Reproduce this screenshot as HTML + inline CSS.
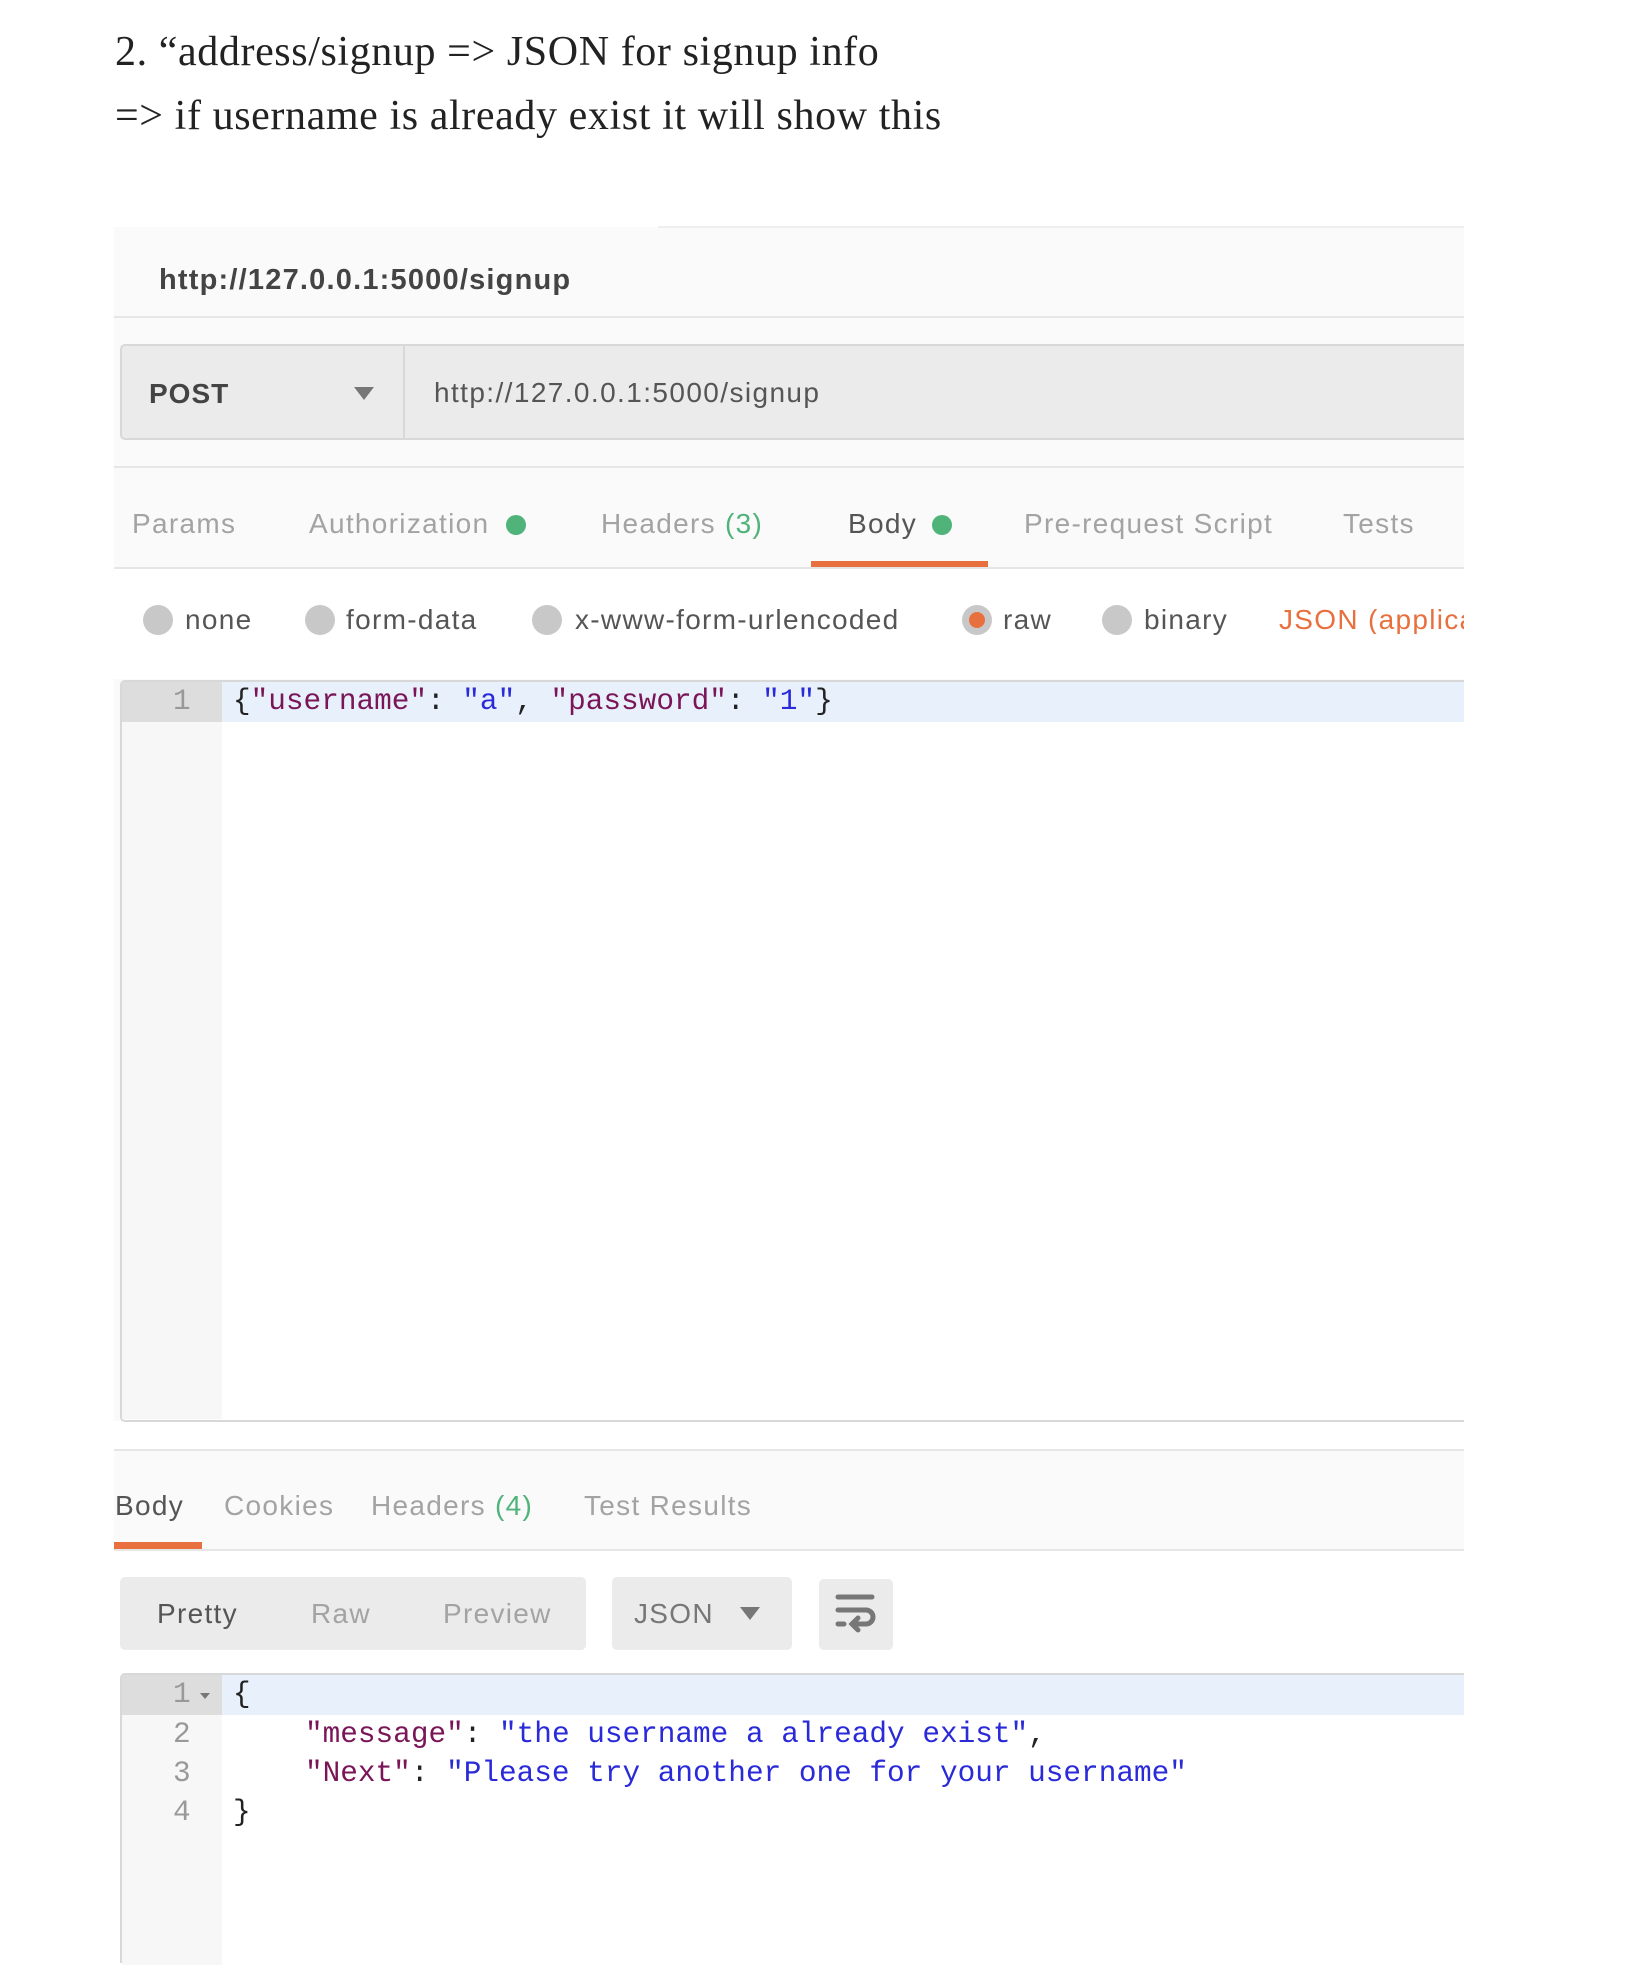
<!DOCTYPE html>
<html><head><meta charset="utf-8"><style>
*{margin:0;padding:0;box-sizing:border-box}
body{width:1630px;height:1948px;background:#fff;position:relative;overflow:hidden;font-family:"Liberation Sans",sans-serif}
.a{position:absolute;white-space:nowrap}
.h{font-family:"Liberation Serif",serif;font-size:42px;color:#222;left:115px;line-height:1;letter-spacing:0.6px}
.t{font-size:28px;color:#a3a3a3;line-height:1;letter-spacing:1.3px}
.m{font-family:"Liberation Mono","DejaVu Sans Mono",monospace;font-size:29.4px;line-height:40px}
.k{color:#7a1657}.s{color:#2a2ad8}
.dot{position:absolute;width:20px;height:20px;border-radius:50%;background:#4fb37a}
.rad{position:absolute;width:30px;height:30px;border-radius:50%;background:#c8c8c8}
.g{color:#4fb37a}
</style></head><body>
<div class="a h" style="top:31px">2. “address/signup =&gt; JSON for signup info</div>
<div class="a h" style="top:95px">=&gt; if username is already exist it will show this</div>

<!-- panel -->
<div class="a" style="left:114px;top:227px;width:1350px;height:1194px;background:#fafafa"></div>
<div class="a" style="left:658px;top:226px;width:806px;height:2px;background:#eee"></div>
<div class="a" style="left:159px;top:264px;font-size:29px;font-weight:bold;color:#444;letter-spacing:1.2px">http://127.0.0.1:5000/signup</div>
<div class="a" style="left:114px;top:316px;width:1350px;height:2px;background:#e6e6e6"></div>
<div class="a" style="left:120px;top:344px;width:1344px;height:96px;background:#ebebeb;border:2px solid #d8d8d8;border-right:none;border-radius:5px 0 0 5px"></div>
<div class="a" style="left:403px;top:346px;width:2px;height:92px;background:#d8d8d8"></div>
<div class="a" style="left:149px;top:378px;font-size:28px;font-weight:bold;color:#444;letter-spacing:1px">POST</div>
<div class="a" style="left:354px;top:387px;width:0;height:0;border-left:10px solid transparent;border-right:10px solid transparent;border-top:13px solid #777"></div>
<div class="a" style="left:434px;top:377px;font-size:28px;color:#555;letter-spacing:1.4px">http://127.0.0.1:5000/signup</div>
<div class="a" style="left:114px;top:466px;width:1350px;height:2px;background:#e6e6e6"></div>

<div class="a t" style="left:132px;top:510px">Params</div>
<div class="a t" style="left:309px;top:510px">Authorization</div><div class="dot" style="left:506px;top:515px"></div>
<div class="a t" style="left:601px;top:510px">Headers <span class="g">(3)</span></div>
<div class="a t" style="left:848px;top:510px;color:#555">Body</div><div class="dot" style="left:932px;top:515px"></div>
<div class="a t" style="left:1024px;top:510px">Pre-request Script</div>
<div class="a t" style="left:1343px;top:510px">Tests</div>
<div class="a" style="left:811px;top:561px;width:177px;height:7px;background:#e8703f"></div>
<div class="a" style="left:114px;top:567px;width:1350px;height:2px;background:#e6e6e6"></div>

<div class="a" style="left:114px;top:569px;width:1350px;height:110px;background:#fff"></div>
<div class="rad" style="left:143px;top:605px"></div><div class="a t" style="left:185px;top:606px;color:#555">none</div>
<div class="rad" style="left:305px;top:605px"></div><div class="a t" style="left:346px;top:606px;color:#555">form-data</div>
<div class="rad" style="left:532px;top:605px"></div><div class="a t" style="left:575px;top:606px;color:#555">x-www-form-urlencoded</div>
<div class="rad" style="left:962px;top:605px"></div><div class="a" style="left:969px;top:612px;width:16px;height:16px;border-radius:50%;background:#e8703f"></div><div class="a t" style="left:1003px;top:606px;color:#555">raw</div>
<div class="rad" style="left:1102px;top:605px"></div><div class="a t" style="left:1144px;top:606px;color:#555">binary</div>
<div class="a t" style="left:1279px;top:606px;color:#e8703f;width:185px;overflow:hidden">JSON (application/json)</div>

<!-- request editor -->
<div class="a" style="left:120px;top:680px;width:1344px;height:742px;background:#fff;border:2px solid #d8d8d8;border-right:none;border-radius:5px 0 0 5px"></div>
<div class="a" style="left:122px;top:682px;width:100px;height:737px;background:#f7f7f7"></div>
<div class="a" style="left:122px;top:682px;width:100px;height:40px;background:#ddd"></div>
<div class="a" style="left:222px;top:682px;width:1242px;height:40px;background:#e8f0fc"></div>
<div class="a m" style="left:173px;top:682px;color:#999">1</div>
<div class="a m" style="left:233px;top:682px;color:#222">{<span class="k">"username"</span>: <span class="s">"a"</span>, <span class="k">"password"</span>: <span class="s">"1"</span>}</div>

<!-- response -->
<div class="a" style="left:114px;top:1449px;width:1350px;height:2px;background:#e6e6e6"></div>
<div class="a" style="left:114px;top:1451px;width:1350px;height:99px;background:#fafafa"></div>
<div class="a t" style="left:115px;top:1492px;color:#555">Body</div>
<div class="a t" style="left:224px;top:1492px">Cookies</div>
<div class="a t" style="left:371px;top:1492px">Headers <span class="g">(4)</span></div>
<div class="a t" style="left:584px;top:1492px">Test Results</div>
<div class="a" style="left:114px;top:1542px;width:88px;height:7px;background:#e8703f"></div>
<div class="a" style="left:114px;top:1549px;width:1350px;height:2px;background:#e6e6e6"></div>

<div class="a" style="left:120px;top:1577px;width:466px;height:73px;background:#ebebeb;border-radius:5px"></div>
<div class="a t" style="left:157px;top:1600px;color:#555">Pretty</div>
<div class="a t" style="left:311px;top:1600px">Raw</div>
<div class="a t" style="left:443px;top:1600px">Preview</div>
<div class="a" style="left:612px;top:1577px;width:180px;height:73px;background:#ebebeb;border-radius:5px"></div>
<div class="a t" style="left:634px;top:1600px;color:#777">JSON</div>
<div class="a" style="left:740px;top:1607px;width:0;height:0;border-left:10px solid transparent;border-right:10px solid transparent;border-top:13px solid #777"></div>
<div class="a" style="left:819px;top:1579px;width:74px;height:71px;background:#ebebeb;border-radius:5px"></div>
<svg class="a" style="left:832px;top:1592px" width="48" height="46" viewBox="0 0 48 46"><g fill="none" stroke="#777" stroke-width="5" stroke-linecap="round"><path d="M6 5H40"/><path d="M6 18H34a7 7 0 0 1 0 14H22"/><path d="M6 32H12"/><path d="M26 26l-6 6 6 6"/></g></svg>

<div class="a" style="left:120px;top:1673px;width:1344px;height:290px;background:#fff;border:2px solid #d8d8d8;border-right:none;border-bottom:none;border-radius:5px 0 0 0"></div>
<div class="a" style="left:122px;top:1675px;width:100px;height:290px;background:#f7f7f7"></div>
<div class="a" style="left:122px;top:1675px;width:100px;height:40px;background:#ddd"></div>
<div class="a" style="left:222px;top:1675px;width:1242px;height:40px;background:#e8f0fc"></div>
<div class="a m" style="left:173px;top:1675px;color:#999">1</div>
<div class="a" style="left:200px;top:1693px;width:0;height:0;border-left:5px solid transparent;border-right:5px solid transparent;border-top:6px solid #777"></div>
<div class="a m" style="left:173px;top:1715px;color:#999">2</div>
<div class="a m" style="left:173px;top:1754px;color:#999">3</div>
<div class="a m" style="left:173px;top:1793px;color:#999">4</div>
<div class="a m" style="left:233px;top:1675px;color:#222">{</div>
<div class="a m" style="left:305px;top:1715px;color:#222"><span class="k">"message"</span>: <span class="s">"the username a already exist"</span>,</div>
<div class="a m" style="left:305px;top:1754px;color:#222"><span class="k">"Next"</span>: <span class="s">"Please try another one for your username"</span></div>
<div class="a m" style="left:233px;top:1793px;color:#222">}</div>
</body></html>
